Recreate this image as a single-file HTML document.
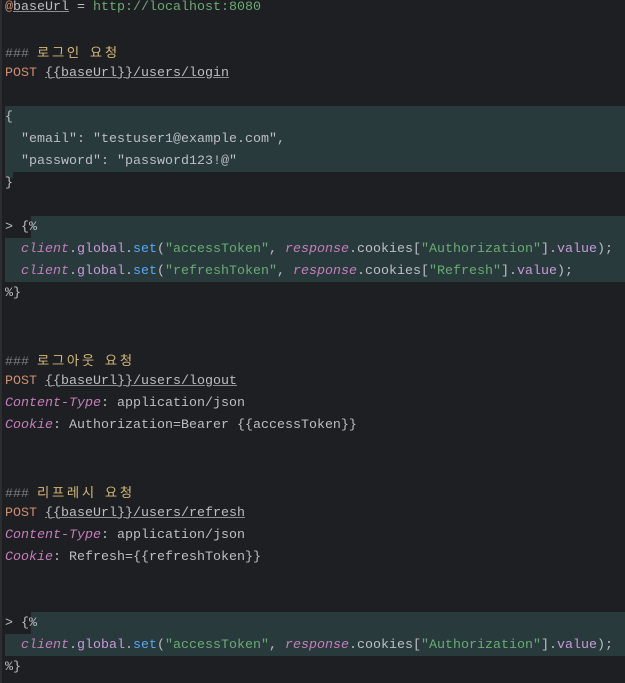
<!DOCTYPE html>
<html><head><meta charset="utf-8"><style>
html,body{margin:0;padding:0;background:#1e1f22;width:625px;height:683px;overflow:hidden}
#ed{position:relative;font-family:"Liberation Mono","Noto Sans CJK KR",monospace;font-size:13.33px;color:#bcbec4;}
.l{position:absolute;left:5px;height:22px;line-height:22px;white-space:pre;margin-top:1px}
.hl{position:absolute;background:#293a3d}
.k{font-family:"Noto Sans CJK KR",sans-serif;letter-spacing:2.7px;color:#d5b778}
.o{color:#cf8e6d}.g{color:#6aab73}.c{color:#7a7e85}.u{text-decoration:underline;text-decoration-color:#8a8c91}
.p{color:#c77dbb;font-style:italic}.v{color:#c79ad8}.b{color:#56a8f5}
.lb{position:absolute;left:0;top:0;width:2px;height:683px;background:#2b2d30}
</style></head><body><div id="ed">
<div class="lb"></div>
<div class="hl" style="left:5px;top:106px;width:620px;height:66px"></div>
<div class="hl" style="left:5px;top:172px;width:8px;height:6px"></div>
<div class="hl" style="left:31px;top:216px;width:594px;height:22px"></div>
<div class="hl" style="left:5px;top:238px;width:620px;height:44px"></div>
<div class="hl" style="left:31px;top:612px;width:594px;height:22px"></div>
<div class="hl" style="left:5px;top:634px;width:620px;height:22px"></div>
<div class="l" style="top:-4px"><span class="o">@</span><span class="u">baseUrl</span> = <span class="g">http://localhost:8080</span></div>
<div class="l" style="top:40px"><span class="c">###</span> <span class="k">로그인</span> <span class="k">요청</span></div>
<div class="l" style="top:62px"><span class="o">POST</span> <span class="u">{{baseUrl}}/users/login</span></div>
<div class="l" style="top:106px">{</div>
<div class="l" style="top:128px">  "email": "testuser1@example.com",</div>
<div class="l" style="top:150px">  "password": "password123!@"</div>
<div class="l" style="top:172px">}</div>
<div class="l" style="top:216px">&gt; {%</div>
<div class="l" style="top:238px">  <span class="p">client</span>.<span class="v">global</span>.<span class="b">set</span>(<span class="g">"accessToken"</span>, <span class="p">response</span>.cookies[<span class="g">"Authorization"</span>].<span class="v">value</span>);</div>
<div class="l" style="top:260px">  <span class="p">client</span>.<span class="v">global</span>.<span class="b">set</span>(<span class="g">"refreshToken"</span>, <span class="p">response</span>.cookies[<span class="g">"Refresh"</span>].<span class="v">value</span>);</div>
<div class="l" style="top:282px">%}</div>
<div class="l" style="top:348px"><span class="c">###</span> <span class="k">로그아웃</span> <span class="k">요청</span></div>
<div class="l" style="top:370px"><span class="o">POST</span> <span class="u">{{baseUrl}}/users/logout</span></div>
<div class="l" style="top:392px"><span class="p">Content-Type</span>: application/json</div>
<div class="l" style="top:414px"><span class="p">Cookie</span>: Authorization=Bearer {{accessToken}}</div>
<div class="l" style="top:480px"><span class="c">###</span> <span class="k">리프레시</span> <span class="k">요청</span></div>
<div class="l" style="top:502px"><span class="o">POST</span> <span class="u">{{baseUrl}}/users/refresh</span></div>
<div class="l" style="top:524px"><span class="p">Content-Type</span>: application/json</div>
<div class="l" style="top:546px"><span class="p">Cookie</span>: Refresh={{refreshToken}}</div>
<div class="l" style="top:612px">&gt; {%</div>
<div class="l" style="top:634px">  <span class="p">client</span>.<span class="v">global</span>.<span class="b">set</span>(<span class="g">"accessToken"</span>, <span class="p">response</span>.cookies[<span class="g">"Authorization"</span>].<span class="v">value</span>);</div>
<div class="l" style="top:656px">%}</div>
</div></body></html>
